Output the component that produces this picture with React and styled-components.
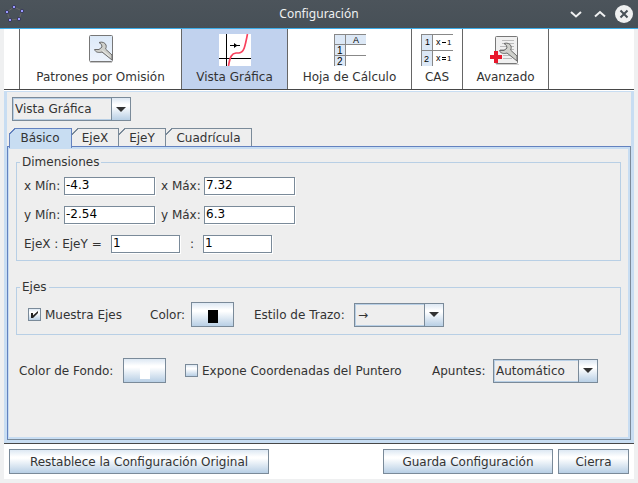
import React, { useState } from "react";
import styled, { createGlobalStyle, css } from "styled-components";

const c = {
  page: "#eeeeee",
  text: "#333333",
  edge: "#7a8a99",
  pale: "#c8ddf2",
  group: "#b8cfe5",
  active: "#6382bf",
  frame: "#eff0f1",
};
const ocean = "linear-gradient(#dde8f3, #ffffff 30%, #ffffff 36%, #b8cfe5)";

const GlobalStyle = createGlobalStyle`
  * { box-sizing: border-box; }
  body { margin: 0; background: ${c.frame}; }
  body, button, input, select { font: 12px/16px "DejaVu Sans", sans-serif; color: ${c.text}; }
`;

const Window = styled.div`
  display: flex;
  flex-direction: column;
  min-height: 100vh;
  background: ${c.frame};
`;
const TitleBar = styled.header`
  display: grid;
  grid-template-columns: 80px 1fr 80px;
  align-items: center;
  height: 29px;
  background: linear-gradient(#4c545b, #475057);
  border-bottom: 1px solid #3daee9;
`;
const Title = styled.h1`
  margin: 0;
  text-align: center;
  font: 12px/18px "Noto Sans", sans-serif;
  color: #eff0f1;
`;
const AppMark = styled.svg`
  margin-left: 3px;
`;
const WindowControls = styled.div`
  display: flex;
  justify-content: flex-end;
  gap: 6px;
  padding-right: 5px;
`;
const WindowButton = styled.button`
  display: flex;
  width: 18px;
  height: 18px;
  padding: 0;
  border: 0;
  background: none;
`;
const Client = styled.div`
  flex: 1;
  display: flex;
  flex-direction: column;
  margin: 0 4px 4px;
  background: #fff;
`;
const Toolbar = styled.nav`
  display: flex;
  height: 61px;
  padding-left: 15px;
  border-bottom: 1px solid #474747;
`;
const ToolButton = styled.button`
  display: flex;
  flex-direction: column;
  align-items: center;
  gap: 3px;
  width: ${(p) => p.$width}px;
  padding: 5px 0 0;
  border: 0;
  border-right: 1px solid #666;
  background: ${(p) => (p.$on ? "#c1d2ee" : "#fff")};
  white-space: nowrap;
  &:first-child { border-left: 1px solid #666; }
`;
const Workspace = styled.main`
  flex: 1;
  display: flex;
  flex-direction: column;
  margin-top: 1px;
  border: 3px solid ${c.pale};
  border-top-width: 1px;
  background: ${c.page};
`;
const ViewPicker = styled.div`
  padding: 5px 5px 7px;
`;
const Combo = styled.span`
  display: inline-grid;
  grid-template-columns: 1fr 19px;
  width: ${(p) => p.$width}px;
  height: 24px;
  border: 1px solid ${c.edge};
  vertical-align: top;
`;
const ComboSelect = styled.select`
  grid-area: 1 / 1 / 2 / 3;
  appearance: none;
  min-width: 0;
  margin: 0;
  padding: 0 20px 0 ${(p) => p.$indent || 1}px;
  border: 1px solid ${c.group};
  border-radius: 0;
  background: ${c.page};
`;
const ComboArrow = styled.span`
  grid-area: 1 / 2 / 2 / 3;
  display: flex;
  align-items: center;
  justify-content: center;
  border-left: 1px solid ${c.edge};
  background: ${ocean};
  pointer-events: none;
`;
const Tabs = styled.div`
  display: flex;
  height: 18px;
  padding-left: 2px;
`;
const Tab = styled.button`
  --edge: ${(p) => (p.$on ? c.active : c.edge)};
  width: ${(p) => p.$width}px;
  height: ${(p) => (p.$on ? 20 : 18)}px;
  padding: ${(p) => (p.$on ? 0 : 2)}px 0 0;
  border: 0;
  border-right: 1px solid var(--edge);
  z-index: ${(p) => (p.$on ? 1 : 0)};
  background:
    linear-gradient(135deg, ${c.page} 4px, var(--edge) 4px, var(--edge) 5px, transparent 5px) 0 0 / 7px 7px no-repeat,
    linear-gradient(var(--edge), var(--edge)) 6px 0 / 100% 1px no-repeat,
    ${(p) => p.$on && css`linear-gradient(${c.active}, ${c.active}) 0 6px / 1px 100% no-repeat,`}
    ${(p) => (p.$on ? c.pale : c.page)};
`;
const TabPanel = styled.section`
  flex: 1;
  border: 1px solid ${c.active};
  border-right-color: ${c.edge};
  border-bottom-color: ${c.edge};
  padding: 7px 9px 0 8px;
  box-shadow: inset 1px 0 ${c.pale}, inset 0 2px ${c.pale}, inset -2px -2px ${c.pale};
`;
const Group = styled.fieldset`
  min-width: 0;
  margin: 0 0 ${(p) => p.$after}px;
  padding: ${(p) => p.$top}px 7px ${(p) => p.$bottom}px;
  border: 1px solid ${c.group};
`;
const GroupTitle = styled.legend`
  margin-left: -4px;
  padding: 0 2px;
`;
const Row = styled.div`
  display: flex;
  align-items: center;
  height: 29px;
`;
const ControlRow = styled.div`
  display: flex;
  align-items: center;
  height: 25px;
  padding-left: ${(p) => p.$inset}px;
  white-space: nowrap;
`;
const Label = styled.label`
  width: ${(p) => p.$width}px;
  white-space: nowrap;
`;
const TextBox = styled.input`
  width: ${(p) => p.$width}px;
  height: 18px;
  margin-right: ${(p) => p.$after || 0}px;
  padding: 0 1px 1px;
  border: 1px solid ${c.edge};
  border-radius: 0;
  outline: 0;
  background: #fff;
  box-shadow: 1px 1px #fff;
  color: #000;
`;
const CheckLabel = styled.label`
  display: flex;
  align-items: center;
  gap: 4px;
  width: ${(p) => p.$width}px;
`;
const CheckBox = styled.input`
  appearance: none;
  flex: none;
  width: 13px;
  height: 13px;
  margin: 0;
  border: 1px solid ${c.edge};
  background: ${ocean};
  &:checked {
    background: url("data:image/svg+xml,%3Csvg xmlns='http://www.w3.org/2000/svg' width='11' height='11'%3E%3Cpath d='M2 4h2v2.5L9 2v2L4 9H2z' fill='%23222'/%3E%3C/svg%3E"), ${ocean};
  }
`;
const ColorButton = styled.button`
  display: flex;
  align-items: center;
  justify-content: center;
  width: 43px;
  height: 25px;
  padding: 3px 0 0;
  margin-right: ${(p) => p.$after}px;
  border: 1px solid ${c.edge};
  background: ${ocean};
`;
const Swatch = styled.span`
  width: 10px;
  height: 13px;
  background: ${(p) => p.$color};
`;
const Footer = styled.footer`
  display: flex;
  gap: 5px;
  padding: 5px 5px;
  border-top: 1px solid #474747;
`;
const ActionButton = styled.button`
  width: ${(p) => p.$width}px;
  height: 25px;
  padding: 0;
  border: 1px solid ${c.edge};
  background: ${ocean};
  white-space: nowrap;
  &:first-child { margin-right: auto; }
`;

const wrenchPath =
  "M14 8.5C17 7.5 20 8.5 21 11C21.5 13 21 14 20.5 15L27 21V26L17 18C14 19 10.5 18.5 9.5 15.5L14 15.5L17 13L16.5 10.5Z";

const PatternIcon = () => (
  <svg width="32" height="32" viewBox="0 0 32 32">
    <defs>
      <linearGradient id="sheet" x2="0" y2="1">
        <stop stopColor="#dce9f8" /><stop offset="1" stopColor="#eef4fc" />
      </linearGradient>
    </defs>
    <path d="M5 28.5H27" stroke="#c8c8c8" />
    <rect x="4.5" y="1.5" width="23" height="26" rx="1" fill="url(#sheet)" stroke="#777" />
    <path d={wrenchPath} fill="#cfd0cb" stroke="#6a6a6a" />
    <path d="M17.5 16.5L24.5 22.5" stroke="#eceeea" />
  </svg>
);
const GraphIcon = () => (
  <svg width="32" height="32" viewBox="0 0 32 32">
    <path fill="#fff" d="M0 0h32v32H0z" />
    <path d="M7.5 0V32M0 24.5H32" stroke="#000" />
    <path d="M11 11.5H21" stroke="#000" />
    <path d="M15 9l3.500 2.500L15 14z" fill="#000" />
    <path d="M9.500 32C11 22 13 19.500 17 19H20C25 18.500 26 13 28.500 0" fill="none" stroke="#f8405c" strokeWidth="1.700" />
  </svg>
);
const GridIcon = () => (
  <svg width="32" height="32" viewBox="0 0 32 32">
    <path d="M0 0H32V11H11V32H0Z" fill="#dce8f6" />
    <path d="M12 11h20v10H12zM12 22h20v10H12z" fill="#fff" />
    <path d="M0 .5H32M0 10.500H32M0 21.500H32M.5 0V32M11.500 0V32" stroke="#888" fill="none" />
    <g fontFamily="Liberation Sans, sans-serif" fontSize="10" fill="#000">
      <text x="19" y="9" fontSize="9">A</text><text x="3" y="20">1</text><text x="3" y="31">2</text>
    </g>
  </svg>
);
const CasIcon = () => (
  <svg width="32" height="32" viewBox="0 0 32 32">
    <path d="M0 0H11V32H0Z" fill="#dce8f6" />
    <path d="M0 .5H32M0 16.500H32M.5 0V32M11.500 0V32" stroke="#888" />
    <g fontFamily="Liberation Sans, sans-serif" fontSize="9" fill="#000">
      <text x="4" y="11">1</text><text x="3" y="28">2</text>
      <text x="15" y="11">x</text><text x="26" y="11" fontSize="8">1</text>
      <text x="15" y="27">x</text><text x="26" y="27" fontSize="8">1</text>
    </g>
    <path d="M21 8.500h4M21 23.500h4M21 25.500h4" stroke="#000" />
  </svg>
);
const AdvancedIcon = () => (
  <svg width="32" height="32" viewBox="0 0 32 32">
    <path d="M6 30.500H29" stroke="#d0d0d0" />
    <rect x="5.500" y="2.500" width="22" height="27" rx="1" fill="#f0f0f0" stroke="#777" />
    <path d="M12 6.500H24M12 9.500H24M10 12.500H24M10 15.500H24M10 18.500H19M13 21.500H22M13 24.500H22" stroke="#bbb" />
    <path transform="translate(0 1)" d={wrenchPath} fill="#cfd0cb" stroke="#6a6a6a" />
    <path d="M4 17H8V21H12V25H8V29H4V25H0V21H4Z" fill="#e8182c" />
  </svg>
);

const tools = [
  ["Patrones por Omisión", 163, PatternIcon],
  ["Vista Gráfica", 106, GraphIcon],
  ["Hoja de Cálculo", 124, GridIcon],
  ["CAS", 51, CasIcon],
  ["Avanzado", 86, AdvancedIcon],
];
const tabs = [["Básico", 63], ["EjeX", 47], ["EjeY", 47], ["Cuadrícula", 86]];
const dots = [[13, 3], [21, 7], [18, 15], [9, 16], [6, 8]];

function Dropdown({ id, width, options, indent, label }) {
  return (
    <Combo $width={width}>
      <ComboSelect id={id} $indent={indent} aria-label={label}>
        {options.map((o) => <option key={o}>{o}</option>)}
      </ComboSelect>
      <ComboArrow>
        <svg width="10" height="5"><path d="M0 0H10L5 5Z" fill="#333" /></svg>
      </ComboArrow>
    </Combo>
  );
}

function Field({ id, label, labelWidth, width, value, after }) {
  return (
    <>
      <Label htmlFor={id} $width={labelWidth}>{label}</Label>
      <TextBox id={id} $width={width} $after={after} defaultValue={value} />
    </>
  );
}

export default function App() {
  const [tool, setTool] = useState(1);
  const [tab, setTab] = useState(0);
  return (
    <Window>
      <GlobalStyle />
      <TitleBar>
        <AppMark width="24" height="20" viewBox="2 0 24 20" aria-hidden="true">
          <path d="M13 3L21 7L18 15L9 16L6 8Z" fill="none" stroke="#686868" />
          {dots.map(([x, y]) => <circle key={x} cx={x} cy={y} r="1.700" fill="#9999ff" stroke="#22223a" strokeWidth=".7" />)}
        </AppMark>
        <Title>Configuración</Title>
        <WindowControls>
          <WindowButton aria-label="Minimizar">
            <svg width="18" height="18"><path d="M4 7l5 4.500L14 7" fill="none" stroke="#eff0f1" strokeWidth="2" /></svg>
          </WindowButton>
          <WindowButton aria-label="Maximizar">
            <svg width="18" height="18"><path d="M4 11.500L9 7l5 4.500" fill="none" stroke="#eff0f1" strokeWidth="2" /></svg>
          </WindowButton>
          <WindowButton aria-label="Cerrar">
            <svg width="18" height="18"><circle cx="9" cy="9" r="9" fill="#eff0f1" /><path d="M5.500 5.500l7 7m0-7l-7 7" stroke="#475057" strokeWidth="2" /></svg>
          </WindowButton>
        </WindowControls>
      </TitleBar>
      <Client>
        <Toolbar>
          {tools.map(([name, width, Icon], i) => (
            <ToolButton key={name} $width={width} $on={i === tool} onClick={() => setTool(i)}>
              <Icon />
              {name}
            </ToolButton>
          ))}
        </Toolbar>
        <Workspace>
          <ViewPicker>
            <Dropdown label="Vista" width={119} options={["Vista Gráfica", "Vista Gráfica 2"]} />
          </ViewPicker>
          <Tabs role="tablist">
            {tabs.map(([name, width], i) => (
              <Tab key={name} role="tab" aria-selected={i === tab} $width={width} $on={i === tab} onClick={() => setTab(i)}>
                {name}
              </Tab>
            ))}
          </Tabs>
          <TabPanel role="tabpanel">
            <Group $after={18} $top={1} $bottom={2}>
              <GroupTitle>Dimensiones</GroupTitle>
              <Row>
                <Field id="xmin" label="x Mín:" labelWidth={40} width={91} value="-4.3" after={6} />
                <Field id="xmax" label="x Máx:" labelWidth={43} width={91} value="7.32" />
              </Row>
              <Row>
                <Field id="ymin" label="y Mín:" labelWidth={40} width={91} value="-2.54" after={6} />
                <Field id="ymax" label="y Máx:" labelWidth={43} width={91} value="6.3" />
              </Row>
              <Row>
                <Field id="rx" label="EjeX : EjeY =" labelWidth={87} width={69} value="1" after={10} />
                <Field id="ry" label=":" labelWidth={13} width={69} value="1" />
              </Row>
            </Group>
            <Group $after={23} $top={7} $bottom={7}>
              <GroupTitle>Ejes</GroupTitle>
              <ControlRow $inset={4}>
                <CheckLabel $width={122}><CheckBox type="checkbox" defaultChecked />Muestra Ejes</CheckLabel>
                <Label htmlFor="axis-color" $width={41}>Color:</Label>
                <ColorButton id="axis-color" $after={20}><Swatch $color="#000" /></ColorButton>
                <Label htmlFor="line-style" $width={100}>Estilo de Trazo:</Label>
                <Dropdown id="line-style" width={90} indent={2} options={["→", "—"]} />
              </ControlRow>
            </Group>
            <ControlRow $inset={3}>
              <Label htmlFor="back-color" $width={104}>Color de Fondo:</Label>
              <ColorButton id="back-color" $after={19}><Swatch $color="#fff" /></ColorButton>
              <CheckLabel $width={247}><CheckBox type="checkbox" />Expone Coordenadas del Puntero</CheckLabel>
              <Label htmlFor="tips" $width={61}>Apuntes:</Label>
              <Dropdown id="tips" width={105} options={["Automático", "Sí", "No"]} />
            </ControlRow>
          </TabPanel>
        </Workspace>
        <Footer>
          <ActionButton $width={260}>Restablece la Configuración Original</ActionButton>
          <ActionButton $width={170}>Guarda Configuración</ActionButton>
          <ActionButton $width={71}>Cierra</ActionButton>
        </Footer>
      </Client>
    </Window>
  );
}
